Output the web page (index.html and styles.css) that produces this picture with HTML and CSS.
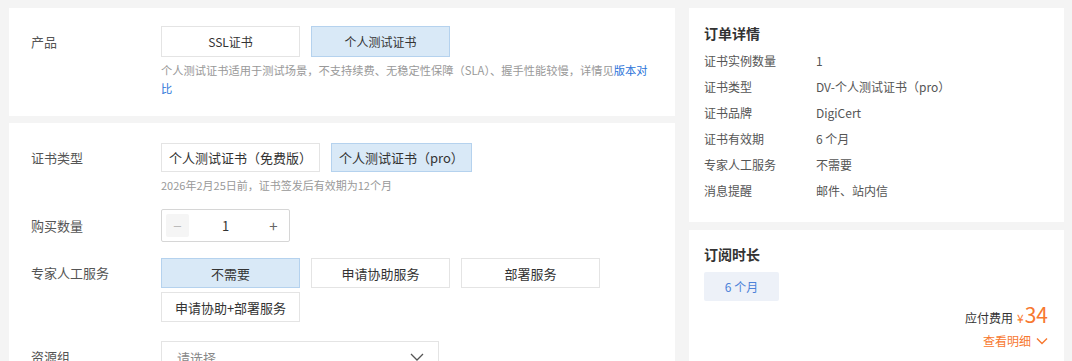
FILE: index.html
```html
<!DOCTYPE html>
<html lang="zh-CN">
<head>
  <meta charset="UTF-8">
  <title>SSL证书购买</title>
  <link rel="stylesheet" href="styles.css">
</head>
<body>
  <div class="page">
    <div class="main">
      <div class="card card-product">
        <div class="row">
          <div class="label label-31">产品</div>
          <div class="field">
            <div class="opts">
              <span class="opt opt-product">SSL证书</span>
              <span class="opt opt-product on">个人测试证书</span>
            </div>
            <p class="desc">个人测试证书适用于测试场景，不支持续费、无稳定性保障（SLA）、握手性能较慢，详情见<a href="#">版本对比</a></p>
          </div>
        </div>
      </div>

      <div class="card card-form">
        <div class="row row-type">
          <div class="label label-29">证书类型</div>
          <div class="field">
            <div class="opts">
              <span class="opt opt-auto">个人测试证书（免费版）</span>
              <span class="opt opt-auto on">个人测试证书（pro）</span>
            </div>
            <p class="hint">2026年2月25日前，证书签发后有效期为12个月</p>
          </div>
        </div>

        <div class="row row-qty">
          <div class="label label-33">购买数量</div>
          <div class="field">
            <div class="stepper">
              <span class="step minus">&minus;</span>
              <span class="num">1</span>
              <span class="step plus">+</span>
            </div>
          </div>
        </div>

        <div class="row row-service">
          <div class="label label-30">专家人工服务</div>
          <div class="field">
            <div class="opts opts-wrap">
              <span class="opt opt-svc on">不需要</span>
              <span class="opt opt-svc">申请协助服务</span>
              <span class="opt opt-svc">部署服务</span>
              <span class="opt opt-svc">申请协助+部署服务</span>
            </div>
          </div>
        </div>

        <div class="row">
          <div class="label label-32">资源组</div>
          <div class="field">
            <div class="select">
              <span>请选择</span>
              <svg width="14" height="8" viewBox="0 0 14 8"><path d="M1 1l6 6 6-6" fill="none" stroke="#555" stroke-width="1.3"/></svg>
            </div>
          </div>
        </div>
      </div>
    </div>

    <div class="side">
      <div class="card card-order">
        <h3 class="title">订单详情</h3>
        <table class="info">
          <tr><th>证书实例数量</th><td>1</td></tr>
          <tr><th>证书类型</th><td>DV-个人测试证书（pro）</td></tr>
          <tr><th>证书品牌</th><td>DigiCert</td></tr>
          <tr><th>证书有效期</th><td>6 个月</td></tr>
          <tr><th>专家人工服务</th><td>不需要</td></tr>
          <tr><th>消息提醒</th><td>邮件、站内信</td></tr>
        </table>
      </div>

      <div class="card card-period">
        <h3 class="title">订阅时长</h3>
        <span class="period">6 个月</span>
        <div class="price">
          <span class="price-label">应付费用</span>
          <span class="yen">¥</span>
          <span class="amount">34</span>
        </div>
        <div class="detail">
          查看明细
          <svg width="12" height="8" viewBox="0 0 12 8"><path d="M1 1.5l5 5 5-5" fill="none" stroke="#f7782f" stroke-width="1.4"/></svg>
        </div>
      </div>
    </div>
  </div>
</body>
</html>
```

FILE: styles.css
```css
html, body {
  margin: 0;
  overflow: hidden;
}
body {
  font-family: "Noto Sans CJK SC", "Noto Sans", sans-serif;
  background: #f4f4f4;
  color: #333333;
}
.page {
  display: flex;
  gap: 14px;
  padding: 8px 8px 0 9px;
}
.main {
  width: 666px;
  display: flex;
  flex-direction: column;
  gap: 7px;
}
.side {
  width: 375px;
  display: flex;
  flex-direction: column;
  gap: 8px;
}
.card {
  background: #ffffff;
}

/* left form */
.card-product {
  padding: 18px 22px 19px 22px;
}
.card-form {
  padding: 20px 22px 40px 22px;
}
.row {
  display: flex;
}
.label {
  width: 130px;
  flex: none;
  font-size: 13px;
  color: #555555;
}
.label-29 { line-height: 29px; }
.label-30 { line-height: 30px; }
.label-31 { line-height: 31px; }
.label-32 { line-height: 32px; }
.label-33 { line-height: 33px; }
.field {
  flex: 1;
}
.opts {
  display: flex;
  gap: 11px;
}
.opts-wrap {
  flex-wrap: wrap;
  row-gap: 4px;
  width: 450px;
}
.opt {
  box-sizing: border-box;
  display: flex;
  align-items: center;
  justify-content: center;
  border: 1px solid #e4e4e4;
  background: #ffffff;
  color: #333333;
}
.opt.on {
  background: #d9e9f7;
  border-color: #b5d2ee;
}
.opt-product {
  width: 139px;
  height: 31px;
  font-size: 12px;
}
.opt-auto {
  height: 29px;
  padding: 0 7px;
  font-size: 13px;
}
.opt-svc {
  width: 139px;
  height: 30px;
  font-size: 13px;
}
.desc {
  margin: 4px 0 0 0;
  width: 490px;
  font-size: 11.25px;
  line-height: 18px;
  color: #999999;
}
.desc a {
  color: #2a73d9;
  text-decoration: none;
}
.hint {
  margin: 4px 0 0 0;
  font-size: 11px;
  line-height: 18px;
  color: #999999;
}
.row-type {
  margin-bottom: 15px;
}
.row-qty {
  margin-bottom: 16px;
}
.row-service {
  margin-bottom: 19px;
}
.stepper {
  box-sizing: border-box;
  width: 129px;
  height: 33px;
  border: 1px solid #d6d6d6;
  border-radius: 2px;
  display: flex;
  align-items: center;
  justify-content: space-between;
  padding: 0 4px;
}
.step {
  width: 23px;
  height: 23px;
  border-radius: 2px;
  display: flex;
  align-items: center;
  justify-content: center;
  font-size: 15px;
}
.minus {
  background: #f5f5f5;
  color: #bbbbbb;
}
.plus {
  color: #666666;
}
.num {
  font-size: 13px;
  color: #333333;
}
.select {
  box-sizing: border-box;
  width: 278px;
  height: 32px;
  border: 1px solid #e4e4e4;
  display: flex;
  align-items: center;
  justify-content: space-between;
  padding: 0 14px 0 15px;
  font-size: 13px;
  color: #888888;
}

/* right side */
.title {
  margin: 0;
  font-size: 14px;
  line-height: 20px;
  font-weight: bold;
  color: #333333;
}
.card-order {
  padding: 15px 15px 18px 15px;
}
.info {
  margin-top: 5px;
  border-collapse: collapse;
  font-size: 12px;
}
.info th {
  width: 112px;
  padding: 0;
  text-align: left;
  font-weight: normal;
  color: #555555;
  line-height: 26px;
}
.info td {
  padding: 0;
  color: #555555;
  line-height: 26px;
}
.card-period {
  padding: 14px 16px 30px 15px;
}
.period {
  display: flex;
  align-items: center;
  justify-content: center;
  width: 75px;
  height: 29px;
  margin-top: 8px;
  background: #edf1f8;
  border-radius: 2px;
  color: #4c82d8;
  font-size: 12px;
}
.price {
  display: flex;
  justify-content: flex-end;
  align-items: baseline;
  margin-top: 2px;
  line-height: 22px;
}
.price-label {
  font-size: 12px;
  color: #333333;
  margin-right: 4px;
}
.yen {
  font-size: 12px;
  color: #f7782f;
  margin-right: 1px;
}
.amount {
  font-size: 21px;
  color: #f7782f;
}
.detail {
  display: flex;
  justify-content: flex-end;
  align-items: center;
  gap: 5px;
  margin-top: 3px;
  font-size: 12px;
  line-height: 18px;
  color: #f7782f;
}
```
